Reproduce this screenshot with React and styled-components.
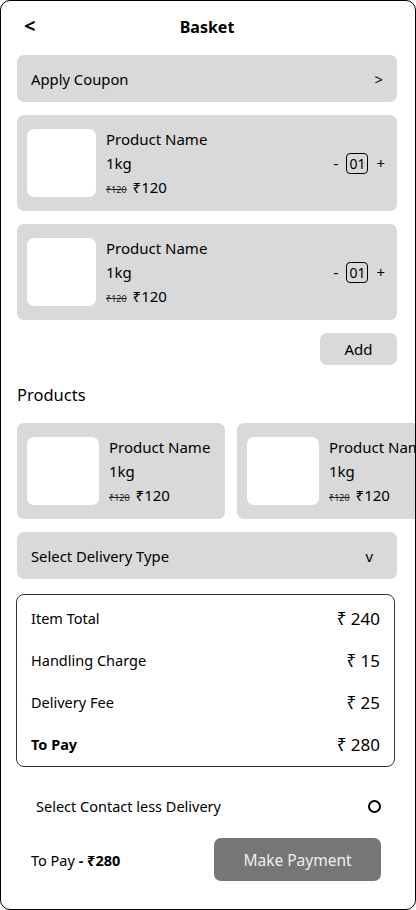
import React from 'react'
import styled, { createGlobalStyle } from 'styled-components'

const GlobalStyle = createGlobalStyle`
  * { box-sizing: border-box; }
  body {
    margin: 0;
    background: #fff;
    font-family: 'Noto Sans', 'DejaVu Sans', sans-serif;
    color: #000;
  }
`

const Frame = styled.div`
  width: 416px;
  height: 910px;
  border: 1px solid #000;
  border-radius: 10px;
  overflow: hidden;
  padding: 0 18px 0 16px;
  display: flex;
  flex-direction: column;
`

const Header = styled.div`
  height: 54px;
  flex: none;
  display: flex;
  align-items: center;
  justify-content: center;
  position: relative;
`

const Back = styled.span`
  position: absolute;
  left: 7px;
  top: 11px;
  font-size: 20px;
  font-weight: 700;
`

const Title = styled.h1`
  margin: 0 0 3px;
  font-size: 16px;
  font-weight: 700;
`

const Content = styled.div`
  display: flex;
  flex-direction: column;
  gap: 13px;
`

const Bar = styled.div`
  height: 47px;
  flex: none;
  background: #d9d9d9;
  border-radius: 7px;
  display: flex;
  align-items: center;
  justify-content: space-between;
  padding: 0 ${p => p.$right || 14}px 0 14px;
  font-size: 14.8px;
`

const Card = styled.div`
  height: 96px;
  background: #d9d9d9;
  border-radius: 7px;
  display: flex;
  align-items: center;
  padding: 0 12px 0 10px;
  gap: 10px;
  flex: ${p => (p.$fixed ? '0 0 208px' : 'none')};
`

const Thumb = styled.div`
  width: ${p => p.$w}px;
  height: 68px;
  border-radius: 7px;
  background: #fff;
  flex-shrink: 0;
`

const Info = styled.div`
  flex: 1;
  display: flex;
  flex-direction: column;
  white-space: nowrap;
`

const Line = styled.div`
  height: 24px;
  line-height: 24px;
  font-size: 15px;
`

const OldPrice = styled.span`
  font-size: 9px;
  text-decoration: line-through;
  margin-right: 6px;
  color: #222;
`

const Qty = styled.div`
  display: flex;
  align-items: center;
  gap: 8px;
  font-size: 15px;
`

const QtyBox = styled.span`
  width: 22px;
  height: 21px;
  border: 1px solid #000;
  border-radius: 4px;
  display: flex;
  align-items: center;
  justify-content: center;
  font-size: 14px;
`

const AddRow = styled.div`
  display: flex;
  justify-content: flex-end;
`

const AddButton = styled.button`
  width: 77px;
  height: 32px;
  border: none;
  border-radius: 7px;
  background: #d9d9d9;
  font-family: inherit;
  font-size: 15px;
  color: #000;
`

const SectionTitle = styled.div`
  height: 32px;
  display: flex;
  align-items: center;
  font-size: 16.5px;
`

const Scroller = styled.div`
  display: flex;
  gap: 12px;
  margin-right: -18px;
  overflow: hidden;
  flex: none;
`

const Summary = styled.div`
  margin: 2px 2px 0 -1px;
  border: 1px solid #333;
  border-radius: 8px;
  padding: 2px 14px 1px;
`

const SumRow = styled.div`
  height: 42px;
  display: flex;
  align-items: center;
  justify-content: space-between;
  font-size: 14.5px;
  font-weight: ${p => (p.$bold ? 700 : 400)};
`

const Amount = styled.span`
  font-size: 17px;
  font-weight: 400;
`

const ContactRow = styled.div`
  margin-top: 13px;
  height: 26px;
  display: flex;
  align-items: center;
  justify-content: space-between;
  padding: 0 16px 0 19px;
  font-size: 14.5px;
`

const Radio = styled.span`
  width: 13px;
  height: 13px;
  border: 2px solid #000;
  border-radius: 50%;
`

const Footer = styled.div`
  margin-top: 6px;
  display: flex;
  align-items: center;
  justify-content: space-between;
  padding: 0 16px 0 14px;
  font-size: 14.5px;
`

const PayButton = styled.button`
  width: 167px;
  height: 43px;
  border: none;
  border-radius: 7px;
  background: #767676;
  color: #eee;
  font-family: inherit;
  font-size: 15.5px;
`

const Product = ({ fixed, thumb, qty }) => (
  <Card $fixed={fixed}>
    <Thumb $w={thumb} />
    <Info>
      <Line>Product Name</Line>
      <Line>1kg</Line>
      <Line>
        <OldPrice>₹120</OldPrice>₹120
      </Line>
    </Info>
    {qty && (
      <Qty>
        <span>-</span>
        <QtyBox>01</QtyBox>
        <span>+</span>
      </Qty>
    )}
  </Card>
)

const rows = [
  ['Item Total', '₹ 240'],
  ['Handling Charge', '₹ 15'],
  ['Delivery Fee', '₹ 25'],
  ['To Pay', '₹ 280', true],
]

export default function App() {
  return (
    <>
      <GlobalStyle />
      <Frame>
        <Header>
          <Back>&lt;</Back>
          <Title>Basket</Title>
        </Header>
        <Content>
          <Bar $right={14}>
            <span>Apply Coupon</span>
            <span>&gt;</span>
          </Bar>
          <Product thumb={69} qty />
          <Product thumb={69} qty />
          <AddRow>
            <AddButton>Add</AddButton>
          </AddRow>
          <SectionTitle>Products</SectionTitle>
          <Scroller>
            <Product fixed thumb={72} />
            <Product fixed thumb={72} />
          </Scroller>
          <Bar $right={24}>
            <span>Select Delivery Type</span>
            <span>v</span>
          </Bar>
          <Summary>
            {rows.map(([label, value, bold]) => (
              <SumRow key={label} $bold={bold}>
                <span>{label}</span>
                <Amount>{value}</Amount>
              </SumRow>
            ))}
          </Summary>
          <ContactRow>
            <span>Select Contact less Delivery</span>
            <Radio />
          </ContactRow>
          <Footer>
            <span>
              To Pay <b>- ₹280</b>
            </span>
            <PayButton>Make Payment</PayButton>
          </Footer>
        </Content>
      </Frame>
    </>
  )
}
